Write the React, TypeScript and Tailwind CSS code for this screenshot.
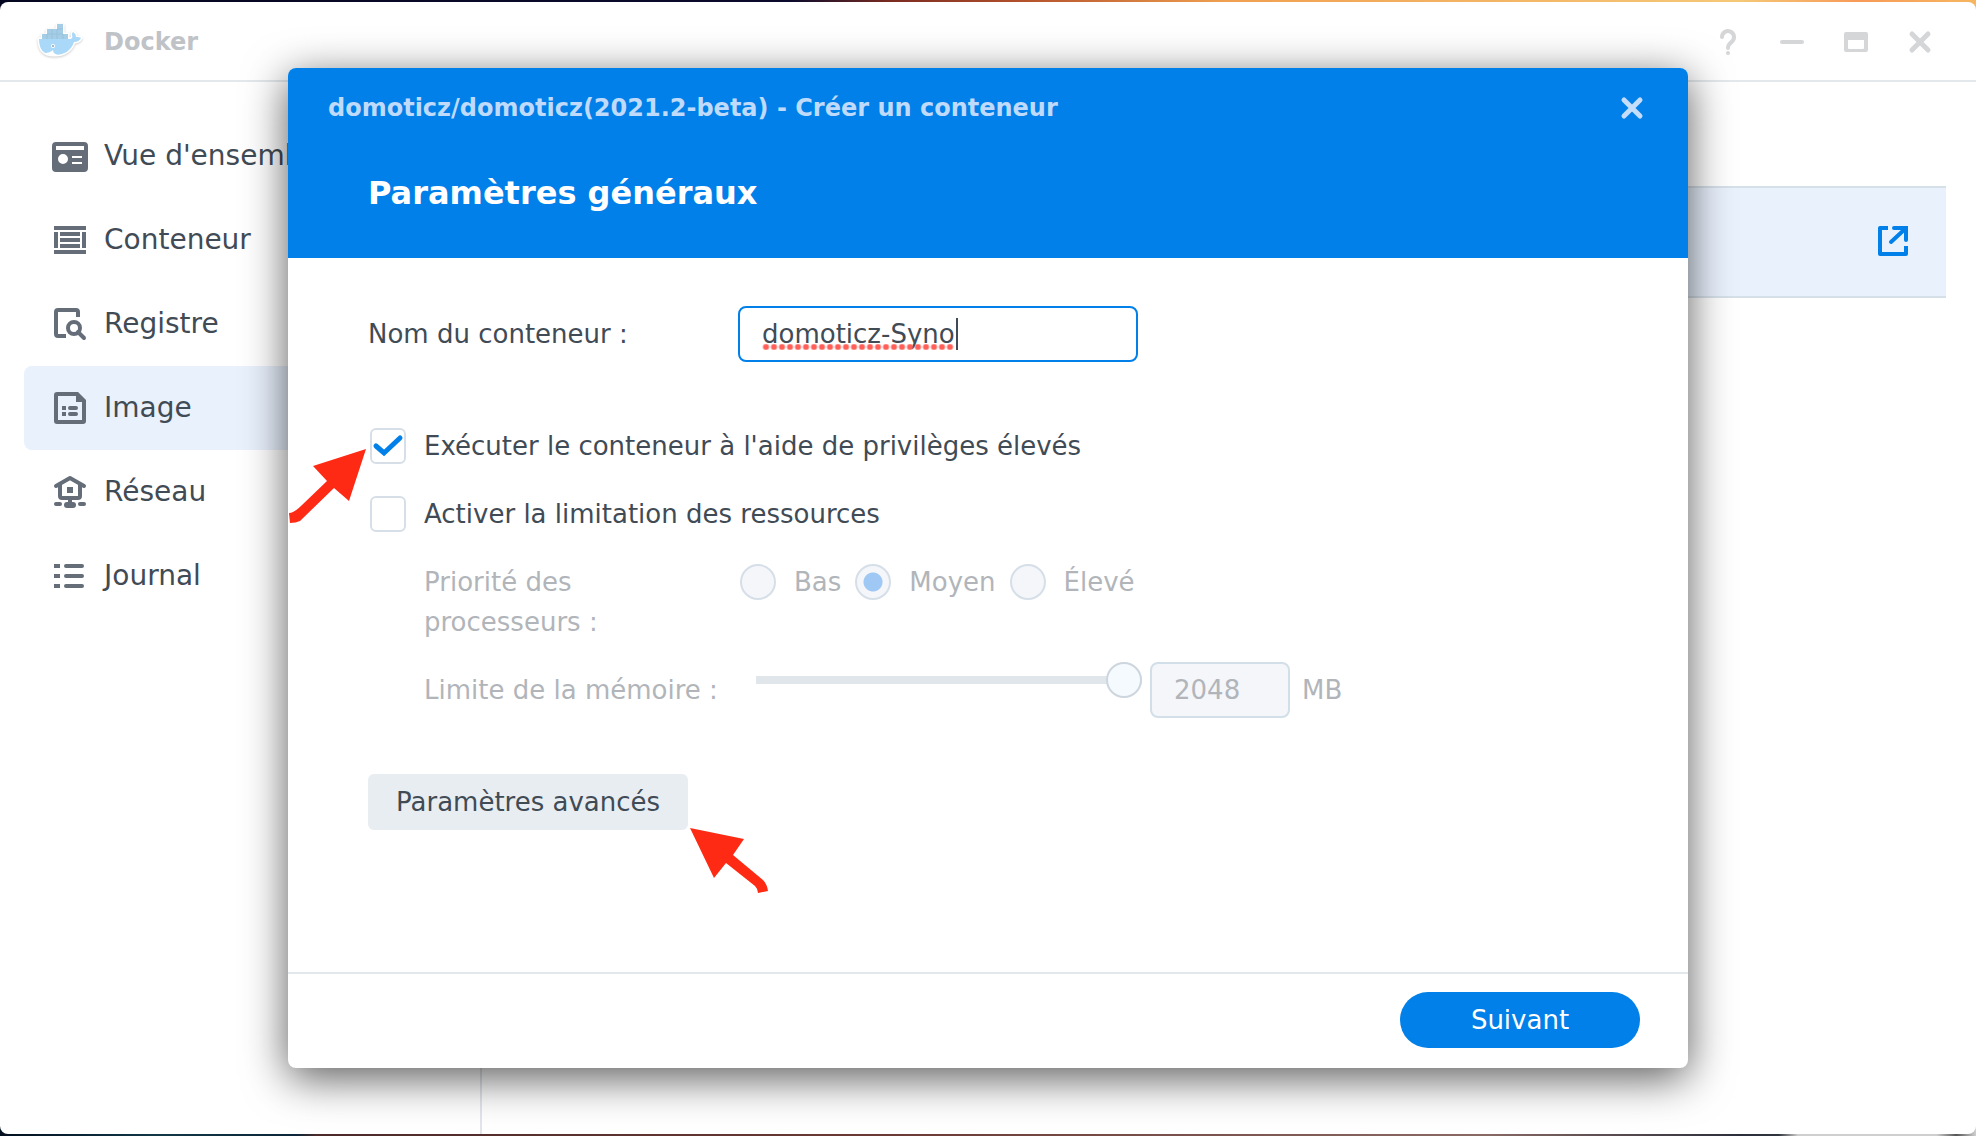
import { useState, type ReactNode } from 'react';

function DockerLogo() {
  return (
    <svg width="48" height="40" viewBox="0 0 48 40" className="shrink-0 drop-shadow-[0_1px_1px_rgba(0,0,0,0.2)]" aria-hidden="true">
      <path
        d="M3 17h3v-4h5V8h10V3h6v9h5v5h2c2 0 3-2 2-4l1-3c2 1 3 3 3 5 2 0 4 0 5 1-1 2-3 4-7 4-3 9-10 13-20 13C8 33 3 28 3 17z"
        fill="#fff"
        stroke="#fff"
        strokeWidth="3"
        strokeLinejoin="round"
      />
      <path
        d="M3 17h31c2 0 3-2 2-4 0-1 0-2 1-3 2 1 3 3 3 5 2 0 4 0 5 1-1 2-3 4-7 4-3 9-10 13-20 13C8 33 3 28 3 17z"
        fill="#a9d8f8"
      />
      <path d="M6 12h5V7h10V2h6v10h5v5H6z" fill="#a5cde6" />
      <path d="M11 12h16M21 7h6M11 12v5M16 7v10M21 7v10M27 12v5" stroke="#97c1dc" strokeWidth="1" fill="none" />
      <path d="M9 31c3 0 6-1 8-3 0 3 2 4 5 5-5 1-10 0-13-2z" fill="#fff" />
      <circle cx="17" cy="24" r="2" fill="#fff" />
      <circle cx="17" cy="24" r="1" fill="#7fa3ba" />
    </svg>
  );
}

const iconProps = { width: 36, height: 36, viewBox: '0 0 36 36', className: 'shrink-0', 'aria-hidden': true } as const;

function OverviewIcon() {
  return (
    <svg {...iconProps}>
      <path
        fillRule="evenodd"
        d="M4 4h28a4 4 0 0 1 4 4v22a4 4 0 0 1-4 4H4a4 4 0 0 1-4-4V8a4 4 0 0 1 4-4zM4 8v4h28V8zM11 16a5 5 0 1 0 0 10a5 5 0 0 0 0-10zM20 18v2h10v-2zM20 24v2h10v-2z"
        fill="#646d78"
      />
    </svg>
  );
}

function ContainerIcon() {
  return (
    <svg {...iconProps}>
      <path
        d="M2 4h32v4H2zM2 28h32v4H2zM2 10h4v16H2zM30 10h4v16h-4zM8 10h20v4H8zM8 16h20v4H8zM8 22h20v4H8z"
        fill="#646d78"
      />
    </svg>
  );
}

function RegistryIcon() {
  return (
    <svg {...iconProps} fill="none" stroke="#646d78" strokeWidth="4">
      <path d="M26 11V6a2 2 0 0 0-2-2H6a2 2 0 0 0-2 2v22a2 2 0 0 0 2 2h8" />
      <circle cx="22" cy="22" r="6" />
      <path d="M26 26l6 6" strokeLinecap="round" />
    </svg>
  );
}

function ImageIcon() {
  return (
    <svg {...iconProps}>
      <path
        fillRule="evenodd"
        d="M5 2h21l8 8v21a3 3 0 0 1-3 3H5a3 3 0 0 1-3-3V5a3 3 0 0 1 3-3zM6 6v24h24V12h-6V6z"
        fill="#646d78"
      />
      <path d="M10 16h4v4h-4zM10 22h4v4h-4z" fill="#646d78" />
      <path d="M18 18h6M18 24h6" stroke="#646d78" strokeWidth="4" strokeLinecap="round" />
    </svg>
  );
}

function NetworkIcon() {
  return (
    <svg {...iconProps}>
      <path d="M4 12L18 4l14 8" fill="none" stroke="#646d78" strokeWidth="4" strokeLinecap="round" strokeLinejoin="round" />
      <path d="M8 11v11a2 2 0 0 0 2 2h16a2 2 0 0 0 2-2V11" fill="none" stroke="#646d78" strokeWidth="4" />
      <path d="M15 13h6v6h-6zM16 24h4v4h-4z" fill="#646d78" />
      <rect x="12" y="28" width="12" height="6" rx="3" fill="#646d78" />
      <rect x="2" y="28" width="8" height="4" rx="2" fill="#646d78" />
      <rect x="26" y="28" width="8" height="4" rx="2" fill="#646d78" />
    </svg>
  );
}

function LogIcon() {
  return (
    <svg {...iconProps}>
      <path d="M2 6h6v4H2zM2 16h6v4H2zM2 26h6v4H2z" fill="#646d78" />
      <path d="M14 8h16M14 18h16M14 28h16" stroke="#646d78" strokeWidth="4" strokeLinecap="round" />
    </svg>
  );
}

function NavItem({ icon, label, active = false }: { icon: ReactNode; label: string; active?: boolean }) {
  return (
    <li>
      <a
        href="#"
        aria-current={active ? 'page' : undefined}
        className={
          active
            ? 'flex h-21 items-center gap-4 rounded-lg bg-[#e9f1fd] px-7 text-[28px] whitespace-nowrap'
            : 'flex h-21 items-center gap-4 rounded-lg px-7 text-[28px] whitespace-nowrap'
        }
      >
        {icon}
        {label}
      </a>
    </li>
  );
}

function CheckRow({ label, initial }: { label: string; initial: boolean }) {
  const [checked, setChecked] = useState(initial);
  return (
    <label className="flex h-17 items-center gap-4.5 pl-0.5">
      <span className="relative flex size-9 shrink-0">
        <input
          type="checkbox"
          checked={checked}
          onChange={(e) => setChecked(e.target.checked)}
          className="size-9 appearance-none rounded-md border-2 border-[#d6dfe8] bg-white"
        />
        {checked && (
          <svg width="36" height="36" viewBox="0 0 36 36" className="pointer-events-none absolute inset-0" aria-hidden="true">
            <path d="M6 18l8 7L30 10" fill="none" stroke="#0080e8" strokeWidth="5" strokeLinecap="round" />
          </svg>
        )}
      </span>
      {label}
    </label>
  );
}

function PriorityOption({ label, checked = false }: { label: string; checked?: boolean }) {
  return (
    <label className="flex items-center gap-4.5">
      <input
        type="radio"
        name="priority"
        disabled
        defaultChecked={checked}
        className="size-9 shrink-0 appearance-none rounded-full border-2 border-[#d6dfe8] bg-[#f4f6fa] checked:bg-[radial-gradient(circle,#a0c8f4_9px,#f4f6fa_10px)]"
      />
      {label}
    </label>
  );
}

function CreateDialog() {
  const [name, setName] = useState('domoticz-Syno');
  return (
    <section
      role="dialog"
      aria-labelledby="dialog-title"
      className="relative flex w-full max-w-[1400px] flex-col rounded-lg bg-white text-[26px] shadow-[0_10px_44px_rgba(0,0,0,0.65)]"
    >
      <header className="rounded-t-lg bg-[#0080e8] px-10 pt-5 pb-[42px]">
        <div className="flex h-10 items-center justify-between">
          <h1 id="dialog-title" className="text-2xl font-bold text-[#bfdafa]">
            domoticz/domoticz(2021.2-beta) - Créer un conteneur
          </h1>
          <button type="button" aria-label="Fermer" className="p-1">
            <svg width="24" height="24" viewBox="0 0 24 24" aria-hidden="true">
              <path d="M4 4l16 16M20 4L4 20" stroke="#c3ddfa" strokeWidth="5" strokeLinecap="round" />
            </svg>
          </button>
        </div>
        <h2 className="mt-[42px] px-10 text-[32px] leading-[46px] font-bold text-white">Paramètres généraux</h2>
      </header>

      <form className="flex flex-col px-20 pt-12" onSubmit={(e) => e.preventDefault()}>
        <div className="flex items-center">
          <label htmlFor="container-name" className="w-[370px] shrink-0">
            Nom du conteneur :
          </label>
          <div className="relative w-[400px]">
            <input
              id="container-name"
              type="text"
              value={name}
              spellCheck={false}
              onChange={(e) => setName(e.target.value)}
              className="h-14 w-full rounded-lg border-2 border-[#0080e8] bg-white px-5.5 caret-transparent outline-none"
            />
            <span className="pointer-events-none absolute top-[38px] left-6 h-1.5 w-48 bg-[radial-gradient(circle_at_4px_3px,#ff5f57_2px,transparent_4px)] bg-[length:8px_6px]" />
            <span className="pointer-events-none absolute top-3 left-[218px] h-8 w-0.5 bg-[#414b55]" />
          </div>
        </div>

        <div className="mt-[50px]">
          <CheckRow label="Exécuter le conteneur à l'aide de privilèges élevés" initial={true} />
          <CheckRow label="Activer la limitation des ressources" initial={false} />
        </div>

        <fieldset disabled className="pl-14 text-[#b1b5ba]">
          <div role="radiogroup" aria-labelledby="priority-label" className="flex items-start pt-3.5">
            <span id="priority-label" className="w-[316px] shrink-0 pr-24 leading-10">
              Priorité des processeurs :
            </span>
            <div className="flex h-10 items-center gap-3.5">
              <PriorityOption label="Bas" />
              <PriorityOption label="Moyen" checked />
              <PriorityOption label="Élevé" />
            </div>
          </div>
          <div className="mt-5 flex">
            <label htmlFor="memory-range" className="w-[332px] shrink-0 leading-[56px]">
              Limite de la mémoire :
            </label>
            <input
              id="memory-range"
              type="range"
              min="0"
              max="2048"
              defaultValue="2048"
              className="h-9 w-[386px] appearance-none bg-[linear-gradient(#e0e6e9,#e0e6e9)] bg-[length:100%_8px] bg-center bg-no-repeat [&::-webkit-slider-thumb]:size-9 [&::-webkit-slider-thumb]:appearance-none [&::-webkit-slider-thumb]:rounded-full [&::-webkit-slider-thumb]:border-2 [&::-webkit-slider-thumb]:border-[#cdd6de] [&::-webkit-slider-thumb]:bg-[#f5faff]"
            />
            <input
              type="text"
              aria-label="Limite de la mémoire en MB"
              defaultValue="2048"
              className="ml-2 h-14 w-35 rounded-lg border-2 border-[#d2dfe8] bg-[#f4f6fa] px-5.5"
            />
            <span className="ml-3 leading-[56px]">MB</span>
          </div>
        </fieldset>

        <button type="button" className="mt-14 h-14 self-start rounded-md bg-[#e8edf2] px-7">
          Paramètres avancés
        </button>
      </form>

      <footer className="mt-[142px] flex h-24 items-center justify-end border-t-2 border-[#e3e8ec] px-12 pb-0.5">
        <button type="button" className="h-14 w-60 rounded-full bg-[#0080e8] text-white">
          Suivant
        </button>
      </footer>

      <svg width="80" height="76" viewBox="0 0 80 76" className="pointer-events-none absolute top-[380px] left-0" aria-hidden="true">
        <path d="M78 1L25 18l14 15L14 57q-8 8-13 8l1 10q6 0 10-2L46 40l15 13z" fill="#ff2a14" />
      </svg>
      <svg width="80" height="66" viewBox="0 0 80 66" className="pointer-events-none absolute top-[760px] left-[402px]" aria-hidden="true">
        <path d="M0 0l54 11-11 16 30 25q4 4 5 11l-10 2q0-4-3-7L36 35 24 50z" fill="#ff2a14" />
      </svg>
    </section>
  );
}

export default function App() {
  return (
    <div className="grid min-h-screen grid-cols-1 grid-rows-1 bg-[linear-gradient(90deg,#050620_0%,#0b0a2c_40%,#7a2a20_45%,#b5532c_52%,#f0a050_62%,#f5c878_88%,#f79a58_94%,#f6b660_100%)] bg-[length:100%_50%] bg-no-repeat font-['DejaVu_Sans',Verdana,sans-serif] text-[#414b55]">
      <div className="col-start-1 row-start-1 flex flex-col bg-[linear-gradient(90deg,#03101f_0%,#123848_8%,#0b2638_15%,#4c2a2a_16%,#6b3a35_45%,#8a6a65_75%,#2b2f3c_88%,#30343c_90%,#cfcfcf_91%,#cfcfcf_98%,#555_99%,#cfcfcf_100%)] bg-[length:100%_50%] bg-bottom bg-no-repeat py-0.5">
        <div className="flex grow flex-col rounded-lg bg-white">
          <header className="flex h-20 items-center border-b-2 border-[#e3e8ec] pt-0.5 pr-10 pl-9">
            <DockerLogo />
            <span className="ml-5 text-2xl font-bold text-[#bfc3c7]">Docker</span>
            <div className="ml-auto flex items-center gap-8">
              <button type="button" aria-label="Aide">
                <svg width="32" height="32" viewBox="0 0 32 32" aria-hidden="true">
                  <path d="M10 11a6 6 0 1 1 10 4.500l-2.500 2.500q-1.500 1.500-1.500 4" fill="none" stroke="#d5d6d8" strokeWidth="4" strokeLinecap="round" />
                  <circle cx="16" cy="27" r="2" fill="#d5d6d8" />
                </svg>
              </button>
              <button type="button" aria-label="Réduire">
                <svg width="32" height="32" viewBox="0 0 32 32" aria-hidden="true">
                  <path d="M6 16h20" stroke="#d5d6d8" strokeWidth="4" strokeLinecap="round" />
                </svg>
              </button>
              <button type="button" aria-label="Agrandir">
                <svg width="32" height="32" viewBox="0 0 32 32" aria-hidden="true">
                  <path fillRule="evenodd" d="M6 6h20q2 0 2 2v16q0 2-2 2H6q-2 0-2-2V8q0-2 2-2zM8 14v8q0 1 1 1h14q1 0 1-1v-8z" fill="#d5d6d8" />
                </svg>
              </button>
              <button type="button" aria-label="Fermer la fenêtre">
                <svg width="32" height="32" viewBox="0 0 32 32" aria-hidden="true">
                  <path d="M8 8l16 16M24 8L8 24" stroke="#d5d6d8" strokeWidth="5" strokeLinecap="round" />
                </svg>
              </button>
            </div>
          </header>
          <div className="flex grow">
            <nav className="w-[482px] shrink-0 border-r-2 border-[#e3e5ec] px-6 pt-8">
              <ul>
                <NavItem icon={<OverviewIcon />} label="Vue d'ensemble" />
                <NavItem icon={<ContainerIcon />} label="Conteneur" />
                <NavItem icon={<RegistryIcon />} label="Registre" />
                <NavItem icon={<ImageIcon />} label="Image" active />
                <NavItem icon={<NetworkIcon />} label="Réseau" />
                <NavItem icon={<LogIcon />} label="Journal" />
              </ul>
            </nav>
            <main className="grow pt-[104px] pr-[30px] pl-[30px]">
              <div className="flex h-28 items-center justify-end border-y-2 border-[#d6e0e9] bg-[#e9f1fd] px-9.5 pb-0.5">
                <a href="#" aria-label="Ouvrir">
                  <svg width="30" height="30" viewBox="1 1 30 30" aria-hidden="true">
                    <path d="M11 3H3v26h26v-8" fill="none" stroke="#0080e8" strokeWidth="4" strokeLinejoin="round" />
                    <path d="M17 3h12v12M28 4L14 17" fill="none" stroke="#0080e8" strokeWidth="4" strokeLinecap="round" />
                  </svg>
                </a>
              </div>
            </main>
          </div>
        </div>
      </div>
      <div className="relative col-start-1 row-start-1 flex items-center justify-center">
        <CreateDialog />
      </div>
    </div>
  );
}
